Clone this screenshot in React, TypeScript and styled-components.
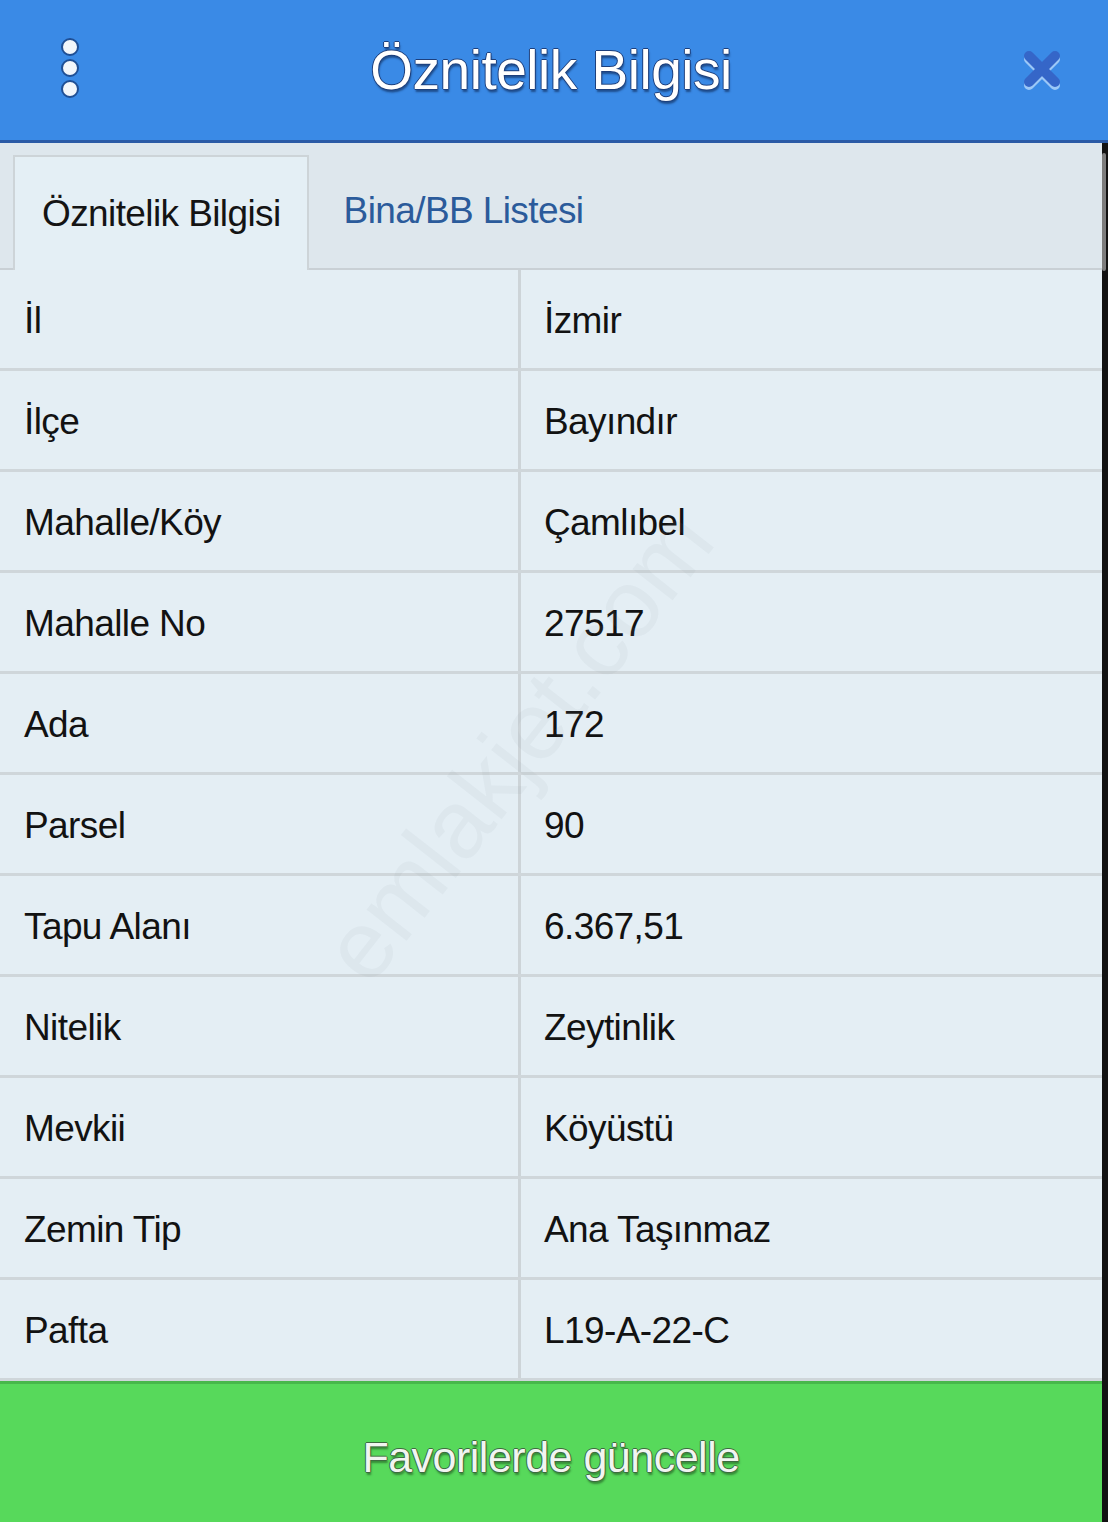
import React from 'react'
import styled, { createGlobalStyle } from 'styled-components'

const rows: [string, string][] = [
  ['İl', 'İzmir'],
  ['İlçe', 'Bayındır'],
  ['Mahalle/Köy', 'Çamlıbel'],
  ['Mahalle No', '27517'],
  ['Ada', '172'],
  ['Parsel', '90'],
  ['Tapu Alanı', '6.367,51'],
  ['Nitelik', 'Zeytinlik'],
  ['Mevkii', 'Köyüstü'],
  ['Zemin Tip', 'Ana Taşınmaz'],
  ['Pafta', 'L19-A-22-C'],
]

const GlobalStyle = createGlobalStyle`
  html, body {
    margin: 0;
    padding: 0;
    background: #111;
  }
  body {
    font-family: "Liberation Sans", Arial, sans-serif;
  }
`

const App: React.FC = () => {
  return (
    <Screen>
      <GlobalStyle />
      <Header>
        <MenuDots aria-label="menu">
          <span />
          <span />
          <span />
        </MenuDots>
        <Title>Öznitelik Bilgisi</Title>
        <CloseButton aria-label="kapat">
          <svg width="44" height="44" viewBox="0 0 44 44">
            <path
              d="M9 11 L35 37 M35 11 L9 37"
              stroke="#9cc8f7"
              strokeWidth="10"
              strokeLinecap="round"
            />
            <path
              d="M9 8 L35 34 M35 8 L9 34"
              stroke="#3566c8"
              strokeWidth="10"
              strokeLinecap="round"
            />
          </svg>
        </CloseButton>
      </Header>
      <Body>
        <Content>
          <Tabs>
            <Tab $active>Öznitelik Bilgisi</Tab>
            <Tab>Bina/BB Listesi</Tab>
          </Tabs>
          <Table>
            {rows.map(([label, value]) => (
              <Row key={label}>
                <Cell>{label}</Cell>
                <Cell $value>{value}</Cell>
              </Row>
            ))}
            <Watermark>emlakjet.com</Watermark>
          </Table>
          <UpdateButton>Favorilerde güncelle</UpdateButton>
        </Content>
        <ScrollTrack>
          <ScrollThumb />
        </ScrollTrack>
      </Body>
    </Screen>
  )
}

const Screen = styled.div`
  width: 1108px;
  height: 1522px;
  display: flex;
  flex-direction: column;
  overflow: hidden;
  background: #111;
`

const Header = styled.header`
  height: 140px;
  flex-shrink: 0;
  display: flex;
  align-items: center;
  justify-content: space-between;
  padding: 0 44px 0 54px;
  background: #3a8ae6;
  border-bottom: 3px solid #2a5aa6;
  position: relative;
`

const MenuDots = styled.div`
  display: flex;
  flex-direction: column;
  gap: 3px;
  width: 32px;
  align-items: center;
  margin-top: -4px;
  span {
    width: 14px;
    height: 14px;
    border-radius: 50%;
    background: #f2f6fb;
    border: 2px solid #1f4f95;
  }
`

const Title = styled.h1`
  position: absolute;
  left: 0;
  right: 6px;
  text-align: center;
  margin: 0;
  font-size: 55px;
  font-weight: normal;
  letter-spacing: -0.5px;
  color: #ffffff;
  text-shadow:
    1px 0 0 #1d3f7c,
    -1px 0 0 #1d3f7c,
    0 1px 0 #1d3f7c,
    0 -1px 0 #1d3f7c,
    1px 3px 2px rgba(10, 30, 70, 0.55);
`

const CloseButton = styled.div`
  width: 44px;
  height: 44px;
  display: flex;
  align-items: center;
  justify-content: center;
`

const Body = styled.div`
  flex: 1;
  display: flex;
  min-height: 0;
`

const Content = styled.main`
  flex: 1;
  display: flex;
  flex-direction: column;
  background: #e4eef4;
`

const Tabs = styled.nav`
  height: 125px;
  flex-shrink: 0;
  display: flex;
  align-items: flex-end;
  padding-left: 13px;
  background: #dee7ed;
  border-bottom: 2px solid #c9d0d5;
`

const Tab = styled.div<{ $active?: boolean }>`
  height: ${(p) => (p.$active ? '115px' : '114px')};
  display: flex;
  align-items: center;
  padding: 0 ${(p) => (p.$active ? '26px' : '35px')} 0 ${(p) => (p.$active ? '27px' : '35px')};
  font-size: 37px;
  letter-spacing: -0.6px;
  color: ${(p) => (p.$active ? '#141414' : '#2b5b9b')};
  background: ${(p) => (p.$active ? '#e4eff5' : 'transparent')};
  border: ${(p) => (p.$active ? '2px solid #cdd4d8' : 'none')};
  border-bottom: none;
  margin-bottom: ${(p) => (p.$active ? '-2px' : '0')};
  box-sizing: border-box;
  position: relative;
`

const Table = styled.section`
  display: flex;
  flex-direction: column;
  position: relative;
  overflow: hidden;
`

const Row = styled.div`
  height: 101px;
  display: grid;
  grid-template-columns: 518px 1fr;
  border-bottom: 3px solid #cfd6da;
  box-sizing: border-box;
  background: #e4eef4;
`

const Cell = styled.div<{ $value?: boolean }>`
  display: flex;
  align-items: center;
  padding-left: ${(p) => (p.$value ? '23px' : '24px')};
  padding-top: 4px;
  font-size: 37px;
  letter-spacing: -0.6px;
  color: #121212;
  border-left: ${(p) => (p.$value ? '3px solid #cdd4d8' : 'none')};
`

const Watermark = styled.div`
  position: absolute;
  left: 235px;
  top: 420px;
  font-size: 96px;
  color: rgba(140, 150, 160, 0.08);
  transform: rotate(-52deg);
  transform-origin: center;
  white-space: nowrap;
  pointer-events: none;
`

const UpdateButton = styled.div`
  flex: 1;
  display: flex;
  align-items: center;
  justify-content: center;
  padding-top: 8px;
  background: #57d95b;
  border-top: 3px solid #47b84b;
  font-size: 43px;
  letter-spacing: -0.5px;
  color: #f1f5f1;
  text-shadow:
    0 1px 0 #3d6b3f,
    0 -1px 0 #3d6b3f,
    1px 0 0 #3d6b3f,
    -1px 0 0 #3d6b3f,
    1px 3px 2px rgba(20, 60, 20, 0.5);
`

const ScrollTrack = styled.aside`
  width: 6px;
  flex-shrink: 0;
  background: #121212;
  padding-top: 10px;
  box-sizing: border-box;
`

const ScrollThumb = styled.div`
  width: 4px;
  height: 118px;
  background: #7d7d7d;
  border-radius: 2px;
`

export default App
